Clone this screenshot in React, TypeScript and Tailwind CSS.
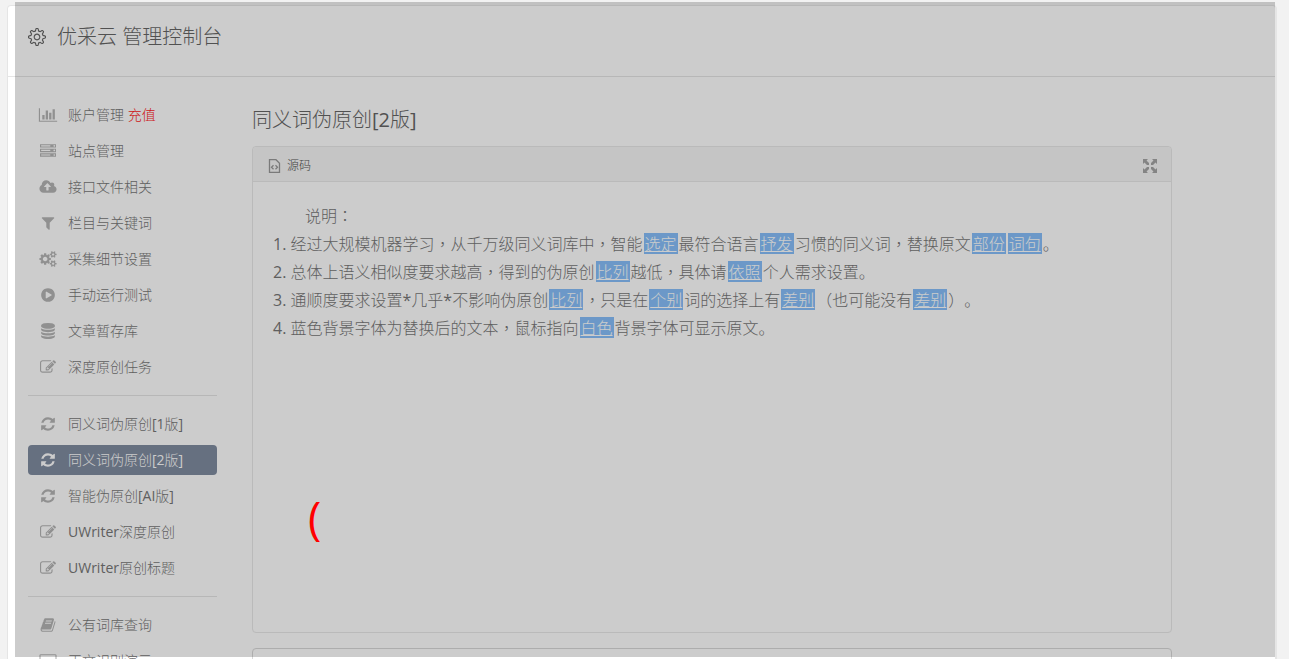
import { SlSettings } from "react-icons/sl";

const icons = {
  chart: {
    width: 2048,
    d: "M640 896v512h-256v-512h256zm384-512v1024h-256v-1024h256zm1024 1152v128h-2048v-1536h128v1408h1920zm-640-896v768h-256v-768h256zm384-384v1152h-256v-1152h256z",
  },
  server: {
    width: 1792,
    d: "M128 1408h1024v-128h-1024v128zm0-512h1024v-128h-1024v128zm1568 448q0-40-28-68t-68-28-68 28-28 68 28 68 68 28 68-28 28-68zm-1568-960h1024v-128h-1024v128zm1568 448q0-40-28-68t-68-28-68 28-28 68 28 68 68 28 68-28 28-68zm0-512q0-40-28-68t-68-28-68 28-28 68 28 68 68 28 68-28 28-68zm96 832v384h-1792v-384h1792zm0-512v384h-1792v-384h1792zm0-512v384h-1792v-384h1792z",
  },
  upload: {
    width: 1920,
    d: "M1280 864q0-14-9-23l-352-352q-9-9-23-9t-23 9l-351 351q-10 12-10 24 0 14 9 23t23 9h224v352q0 13 9.500 22.500t22.500 9.500h192q13 0 22.500-9.500t9.500-22.500v-352h224q13 0 22.500-9.500t9.500-22.500zm640 288q0 159-112.500 271.500t-271.500 112.500h-1088q-185 0-316.500-131.500t-131.500-316.500q0-130 70-240t188-165q-2-30-2-43 0-212 150-362t362-150q156 0 285.500 87t188.500 231q71-62 166-62 106 0 181 75t75 181q0 76-41 138 130 31 213.500 135.500t83.500 238.500z",
  },
  filter: {
    width: 1792,
    d: "M1595 295q17 41-14 70l-493 493v742q0 42-39 59-13 5-25 5-27 0-45-19l-256-256q-19-19-19-45v-486l-493-493q-31-29-14-70 17-39 59-39h1280q42 0 59 39z",
  },
  cogs: {
    width: 1920,
    d: "M896 896q0-106-75-181t-181-75-181 75-75 181 75 181 181 75 181-75 75-181zm768 512q0-52-38-90t-90-38-90 38-38 90q0 53 37.5 90.5t90.5 37.5 90.5-37.5 37.5-90.5zm0-1024q0-52-38-90t-90-38-90 38-38 90q0 53 37.5 90.5t90.5 37.5 90.5-37.5 37.5-90.5zm-384 421v185q0 10-7 19.5t-16 10.5l-155 24q-11 35-32 76 34 48 90 115 7 11 7 20 0 12-7 19-23 30-82.5 89.5t-78.5 59.5q-11 0-21-7l-115-90q-37 19-77 31-11 108-23 155-7 24-30 24h-186q-11 0-20-7.5t-10-17.5l-23-153q-34-10-75-31l-118 89q-7 7-20 7-11 0-21-8-144-133-144-160 0-9 7-19 10-14 41-53t47-61q-23-44-35-82l-152-24q-10-1-17-9.5t-7-19.5v-185q0-10 7-19.5t16-10.5l155-24q11-35 32-76-34-48-90-115-7-11-7-20 0-12 7-20 22-30 82-89t79-59q11 0 21 7l115 90q34-18 77-32 11-108 23-154 7-24 30-24h186q11 0 20 7.5t10 17.5l23 153q34 10 75 31l118-89q8-7 20-7 11 0 21 8 144 133 144 160 0 8-7 19-12 16-42 54t-45 60q23 48 34 82l152 23q10 2 17 10.5t7 19.5zm640 533v140q0 16-149 31-12 27-30 52 51 113 51 138 0 4-4 7-122 71-124 71-8 0-46-47t-52-68q-20 2-30 2t-30-2q-14 21-52 68t-46 47q-2 0-124-71-4-3-4-7 0-25 51-138-18-25-30-52-149-15-149-31v-140q0-16 149-31 13-29 30-52-51-113-51-138 0-4 4-7 4-2 35-20t59-34 30-16q8 0 46 46.5t52 67.5q20-2 30-2t30 2q51-71 92-112l6-2q4 0 124 70 4 3 4 7 0 25-51 138 17 23 30 52 149 15 149 31zm0-1024v140q0 16-149 31-12 27-30 52 51 113 51 138 0 4-4 7-122 71-124 71-8 0-46-47t-52-68q-20 2-30 2t-30-2q-14 21-52 68t-46 47q-2 0-124-71-4-3-4-7 0-25 51-138-18-25-30-52-149-15-149-31v-140q0-16 149-31 13-29 30-52-51-113-51-138 0-4 4-7 4-2 35-20t59-34 30-16q8 0 46 46.5t52 67.5q20-2 30-2t30 2q51-71 92-112l6-2q4 0 124 70 4 3 4 7 0 25-51 138 17 23 30 52 149 15 149 31z",
  },
  play: {
    width: 1792,
    d: "M896 128q209 0 385.500 103t279.500 279.500 103 385.500-103 385.500-279.500 279.500-385.500 103-385.500-103-279.500-279.500-103-385.500 103-385.500 279.500-279.500 385.500-103zm384 823q32-18 32-55t-32-55l-544-320q-31-19-64-1-32 19-32 56v640q0 37 32 56 16 8 32 8 17 0 32-9z",
  },
  database: {
    width: 1792,
    d: "M896 768q237 0 443-43t325-127v170q0 69-103 128t-280 93.5-385 34.5-385-34.5-280-93.5-103-128v-170q119 84 325 127t443 43zm0 768q237 0 443-43t325-127v170q0 69-103 128t-280 93.5-385 34.5-385-34.5-280-93.5-103-128v-170q119 84 325 127t443 43zm0-384q237 0 443-43t325-127v170q0 69-103 128t-280 93.5-385 34.5-385-34.5-280-93.5-103-128v-170q119 84 325 127t443 43zm0-1152q208 0 385 34.5t280 93.5 103 128v128q0 69-103 128t-280 93.5-385 34.5-385-34.5-280-93.5-103-128v-128q0-69 103-128t280-93.5 385-34.5z",
  },
  edit: {
    width: 1792,
    d: "M888 1184l116-116-152-152-116 116v56h96v96h56zm440-720q-16-16-33 1l-350 350q-17 17-1 33t33-1l350-350q17-17 1-33zm80 594v190q0 119-84.5 203.5t-203.5 84.5h-832q-119 0-203.5-84.5t-84.5-203.5v-832q0-119 84.5-203.5t203.5-84.5h832q63 0 117 25 15 7 18 23 3 17-9 29l-49 49q-14 14-32 8-23-6-45-6h-832q-66 0-113 47t-47 113v832q0 66 47 113t113 47h832q66 0 113-47t47-113v-126q0-13 9-22l64-64q15-15 35-7t20 29zm-96-738l288 288-672 672h-288v-288zm444 132l-92 92-288-288 92-92q28-28 68-28t68 28l152 152q28 28 28 68t-28 68z",
  },
  refresh: {
    width: 1792,
    d: "M1639 1056q0 5-1 7-64 268-268 434.5t-478 166.5q-146 0-282.5-55t-243.5-157l-129 129q-19 19-45 19t-45-19-19-45v-448q0-26 19-45t45-19h448q26 0 45 19t19 45-19 45l-137 137q71 66 161 102t187 36q134 0 250-65t186-179q11-17 53-117 8-23 30-23h192q13 0 22.5 9.5t9.5 22.5zm25-800v448q0 26-19 45t-45 19h-448q-26 0-45-19t-19-45 19-45l138-138q-148-137-349-137-134 0-250 65t-186 179q-11 17-53 117-8 23-30 23h-199q-13 0-22.5-9.5t-9.5-22.5v-7q65-268 270-434.5t480-166.5q146 0 284 55.5t245 156.5l130-129q19-19 45-19t45 19 19 45z",
  },
  book: {
    width: 1792,
    d: "M1703 478q40 57 18 129l-275 906q-19 64-76.5 107.5t-122.5 43.5h-923q-77 0-148.5-53.5t-99.5-131.5q-24-67-2-127 0-4 3-27t4-37q1-8-3-21.5t-3-19.5q2-11 8-21t16.5-23.5 16.5-23.5q23-38 45-91.5t30-91.5q3-10 .5-30t-.5-28q3-11 17-28t17-23q21-36 42-92t25-90q1-9-2.5-32t.5-28q4-13 22-30.5t22-22.5q19-26 42.5-84.5t27.5-96.5q1-8-3-25.5t-2-26.5q2-8 9-18t18-23 17-21q8-12 16.5-30.5t15-35 16-36 19.5-32 26.5-23.5 36-11.5 47.5 5.5l-1 3q38-9 51-9h761q74 0 114 56t18 130l-274 906q-36 119-71.5 153.5t-128.5 34.5h-869q-27 0-38 15-11 16-1 43 24 70 144 70h923q29 0 56-15.5t35-41.5l300-987q7-22 5-57 38 15 59 43zm-1064 2q-4 13 2 22.5t20 9.5h608q13 0 25.5-9.5t16.5-22.5l21-64q4-13-2-22.5t-20-9.5h-608q-13 0-25.5 9.5t-16.5 22.5zm-83 256q-4 13 2 22.5t20 9.5h608q13 0 25.5-9.5t16.5-22.5l21-64q4-13-2-22.5t-20-9.5h-608q-13 0-25.5 9.5t-16.5 22.5z",
  },
  desktop: {
    width: 1920,
    d: "M1792 1120v-832q0-13-9.500-22.500t-22.500-9.500h-1600q-13 0-22.500 9.500t-9.500 22.500v832q0 13 9.500 22.500t22.500 9.500h1600q13 0 22.500-9.500t9.500-22.500zm128-832v1088q0 66-47 113t-113 47h-1600q-66 0-113-47t-47-113v-1088q0-66 47-113t113-47h1600q66 0 113 47t47 113z",
  },
};

type IconName = keyof typeof icons;

type NavItem = {
  label: string;
  icon: IconName;
  tag?: string;
  active?: boolean;
};

const navGroups: NavItem[][] = [
  [
    { label: "账户管理", icon: "chart", tag: "充值" },
    { label: "站点管理", icon: "server" },
    { label: "接口文件相关", icon: "upload" },
    { label: "栏目与关键词", icon: "filter" },
    { label: "采集细节设置", icon: "cogs" },
    { label: "手动运行测试", icon: "play" },
    { label: "文章暂存库", icon: "database" },
    { label: "深度原创任务", icon: "edit" },
  ],
  [
    { label: "同义词伪原创[1版]", icon: "refresh" },
    { label: "同义词伪原创[2版]", icon: "refresh", active: true },
    { label: "智能伪原创[AI版]", icon: "refresh" },
    { label: "UWriter深度原创", icon: "edit" },
    { label: "UWriter原创标题", icon: "edit" },
  ],
  [
    { label: "公有词库查询", icon: "book" },
    { label: "正文识别演示", icon: "desktop" },
  ],
];

// Words wrapped in {} are the replaced synonyms
const lines = [
  "1. 经过大规模机器学习，从千万级同义词库中，智能{选定}最符合语言{抒发}习惯的同义词，替换原文{部份}{词句}。",
  "2. 总体上语义相似度要求越高，得到的伪原创{比列}越低，具体请{依照}个人需求设置。",
  "3. 通顺度要求设置*几乎*不影响伪原创{比列}，只是在{个别}词的选择上有{差别}（也可能没有{差别}）。",
  "4. 蓝色背景字体为替换后的文本，鼠标指向{白色}背景字体可显示原文。",
];

function Icon({ name, className }: { name: IconName; className: string }) {
  const icon = icons[name];
  return (
    <svg
      className={`w-5 h-4 shrink-0 ${className}`}
      viewBox={`0 0 ${icon.width} 1792`}
      fill="currentColor"
      aria-hidden="true"
    >
      <path d={icon.d} />
    </svg>
  );
}

function Line({ text, className }: { text: string; className?: string }) {
  return (
    <p className={className}>
      {text.split(/(\{.*?\}|[，：])/).map((part, i) => {
        if (part.startsWith("{")) {
          return (
            <span
              key={i}
              className="inline-block align-top mx-px px-px mt-[3px] h-[21px] leading-[22px] bg-[#87bffa] text-white underline"
            >
              {part.slice(1, -1)}
            </span>
          );
        }
        // centred full-width comma and colon
        if (part === "，" || part === "：") {
          return (
            <span
              key={i}
              className="leading-none font-['Noto_Sans_CJK_TC_Light','Noto_Sans_CJK_TC',sans-serif]"
            >
              {part}
            </span>
          );
        }
        return part;
      })}
    </p>
  );
}

function Sidebar() {
  return (
    <nav className="w-[189px] shrink-0">
      {navGroups.map((group, i) => (
        <ul
          key={i}
          className={`space-y-1.5 ${i > 0 ? "mt-[13px] pt-[13px] border-t border-[#e5e5e5]" : ""}`}
        >
          {group.map((item) => (
            <li key={item.label}>
              <a
                href="#"
                className={`flex items-center h-[30px] px-2.5 gap-2.5 rounded text-sm whitespace-nowrap ${
                  item.active ? "bg-[#808ca0] text-white" : "text-[#777]"
                }`}
              >
                <Icon
                  name={item.icon}
                  className={item.active ? "text-white" : "text-[#b5b5b5]"}
                />
                <span>
                  {item.label}
                  {item.tag && <span className="text-[#f22]"> {item.tag}</span>}
                </span>
              </a>
            </li>
          ))}
        </ul>
      ))}
    </nav>
  );
}

function Editor() {
  return (
    <section className="h-[487px] rounded border border-[#e9e9e9]">
      <div className="flex items-center justify-between h-[35px] pl-[15px] pr-3.5 rounded-t bg-[#f7f7f7] border-b border-[#e9e9e9]">
        <button className="flex items-center gap-1.5 pt-1 text-xs text-[#555]">
          <svg
            className="w-[13px] h-[14px]"
            viewBox="0 0 13 14"
            fill="none"
            stroke="#999"
            aria-hidden="true"
          >
            <path d="M1.500 .7h6.500l3.500 3.500v9.100h-10z" strokeWidth="1.300" />
            <path d="M5.500 6.300l-2 2 2 2M7.500 6.300l2 2-2 2" strokeWidth="1.300" />
          </svg>
          源码
        </button>
        <button aria-label="最大化" className="mt-1 text-[#a5a5a5]">
          <svg className="w-[14px] h-[14px]" viewBox="0 0 14 14" fill="currentColor">
            <path d="M0 0h5L3.500 1.500 6 4v2H4L1.500 3.500 0 5zM14 0v5l-1.500-1.500L10 6H8V4l2.500-2.500L9 0zM0 14V9l1.500 1.500L4 8h2v2l-2.500 2.500L5 14zM14 14H9l1.500-1.500L8 10V8h2l2.500 2.500L14 9z" />
          </svg>
        </button>
      </div>
      <div className="p-5 text-base leading-7 text-[#777] [text-spacing-trim:space-all]">
        <Line className="indent-8" text="说明：" />
        {lines.map((line) => (
          <Line key={line} text={line} />
        ))}
      </div>
    </section>
  );
}

export default function App() {
  return (
    <div className="relative h-screen overflow-hidden bg-[#f2f2f2] pt-[5px] pl-[7px] pr-3 font-normal font-['Open_Sans','Noto_Sans_CJK_SC_Light','Noto_Sans_CJK_SC',sans-serif]">
      <div className="min-h-full rounded bg-white border border-r-2 border-[#e5e5e5]">
        <header className="flex items-center gap-[11px] h-[71px] pl-5 pb-2 border-b border-[#e5e5e5] text-[#666]">
          <SlSettings className="w-[18px] h-[18px]" />
          <h1 className="text-xl">优采云 管理控制台</h1>
        </header>

        <div className="flex gap-[35px] pt-[23px] pl-5 pr-[103px]">
          <Sidebar />
          <main className="flex-1 min-w-0">
            <h2 className="h-[46px] pt-1.5 text-xl text-[#666]">同义词伪原创[2版]</h2>
            <Editor />
            <textarea
              aria-label="原文"
              className="block w-full h-40 mt-[15px] rounded border border-[#d9d9d9] resize-none"
            />
          </main>
        </div>
      </div>

      {/* Loading mask */}
      <div className="absolute top-0.5 bottom-0.5 left-[15px] right-3.5 bg-black/20">
        <span className="absolute left-[293px] top-[489px] text-[45px] leading-[54px] text-[#f00]">
          (
        </span>
      </div>
    </div>
  );
}
